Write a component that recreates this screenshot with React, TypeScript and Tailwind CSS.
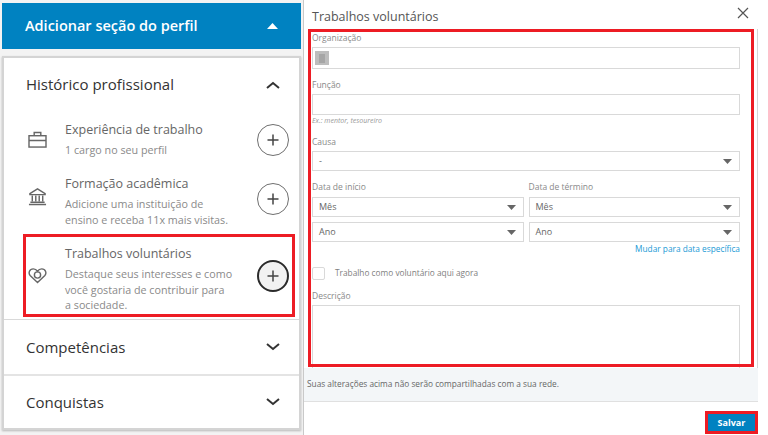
import React from "react";

const Plus = ({ active }: { active?: boolean }) => (
  <div className={`flex h-[32px] w-[32px] shrink-0 items-center justify-center rounded-full border ${active ? "border-2 border-[#2b2b2b] bg-[#f2f2f2]" : "border-[#6f6f6f] bg-white"}`}>
    <svg width="14" height="14" viewBox="0 0 14 14" fill="none" stroke="#444" strokeWidth="1.5">
      <path d="M7 1.5v11M1.5 7h11" />
    </svg>
  </div>
);

const Chevron = ({ up }: { up?: boolean }) => (
  <svg width="14" height="8" viewBox="0 0 14 8" fill="none" stroke="#333" strokeWidth="2" className="mr-[19px]">
    <path d={up ? "M1 7l6-5 6 5" : "M1 1l6 5 6-5"} />
  </svg>
);

const Caret = () => (
  <svg width="9" height="5" viewBox="0 0 9 5" fill="#666"><path d="M0 0h9L4.500 5z" /></svg>
);

const Briefcase = () => (
  <svg width="19" height="17" viewBox="0 0 20 18" fill="none" stroke="#666" strokeWidth="1.500">
    <rect x="1" y="5" width="18" height="12" />
    <path d="M1 10h18M6.500 5V1.500h7V5" />
  </svg>
);

const Bank = () => (
  <svg width="19" height="19" viewBox="0 0 20 20" fill="none" stroke="#666" strokeWidth="1.500">
    <path d="M2 7l8-5 8 5v1H2z" />
    <path d="M4.500 9v6M8.200 9v6M11.800 9v6M15.500 9v6M2.500 16h15M1 18.500h18" />
  </svg>
);

const Heart = () => (
  <svg width="19" height="17" viewBox="0 0 20 18" fill="none" stroke="#666" strokeWidth="1.500">
    <path d="M10 16.500L2.200 9C0 6.500 1.500 2 5.500 2c2 0 3.500 1 4.500 2.500C11 3 12.500 2 14.500 2c4 0 5.500 4.500 3.300 7z" />
    <circle cx="10" cy="8.500" r="3.300" />
  </svg>
);

const Row = ({ icon, title, desc, active, className, iconClass = "", textClass = "" }: { icon: React.ReactNode; title: string; desc: React.ReactNode; active?: boolean; className: string; iconClass?: string; textClass?: string }) => (
  <div className={`flex ${className}`}>
    <div className={`flex w-[39px] shrink-0 items-center pl-[2px] ${iconClass}`}>{icon}</div>
    <div className={`min-w-0 flex-1 ${textClass}`}>
      <div className="text-[12.500px] leading-[18px] text-[#666]">{title}</div>
      <div className="mt-[4px] text-[10.750px] leading-[15.500px] text-[#8a8a8a]">{desc}</div>
    </div>
    <div className="flex items-center"><Plus active={active} /></div>
  </div>
);

const Select = ({ value }: { value: string }) => (
  <div className="flex h-[20px] items-center justify-between border border-[#d9d9d9] pr-[7px] pl-[6px] text-[9px] text-[#666]">
    <span>{value}</span>
    <Caret />
  </div>
);

const Label = ({ children, className = "" }: { children: React.ReactNode; className?: string }) => (
  <div className={`text-[8.500px] leading-[10px] text-[#8a8a8a] ${className}`}>{children}</div>
);

export default function App() {
  return (
    <div className="flex h-[435px] w-[768px] overflow-hidden bg-white font-['Open_Sans','Noto_Sans',sans-serif]">
      <div className="flex w-[303px] shrink-0 flex-col bg-[#f3f3f3] pt-[3px] pr-[2px] pl-[2px]">
        <div className="flex h-[46px] items-center justify-between bg-[#0082c1] pr-[23px] pl-[23px] text-white">
          <span className="text-[14.500px] font-semibold">Adicionar seção do perfil</span>
          <svg width="11" height="6" viewBox="0 0 11 6" fill="white"><path d="M5.500 0L11 6H0z" /></svg>
        </div>
        <div className="mt-[7px] flex h-[374px] flex-col border-2 border-[#d4d4d4] bg-white shadow-[0_1px_2px_rgba(0,0,0,0.25)]">
          <div className="flex h-[54px] items-center justify-between pl-[22px]">
            <span className="text-[15px] text-[#333]">Histórico profissional</span>
            <Chevron up />
          </div>
          <Row className="mt-[10px] mr-[10px] h-[37px] pl-[22px]" icon={<Briefcase />} title="Experiência de trabalho" desc="1 cargo no seu perfil" />
          <Row className="mt-[17px] mr-[10px] h-[48px] pl-[22px]" iconClass="pb-[6px]" icon={<Bank />} title="Formação acadêmica" desc={<>Adicione uma instituição de<br />ensino e receba 11x mais visitas.</>} />
          <div className="mt-[11px] mr-[4px] ml-[19px] h-[83px] shrink-0 border-[3px] border-[#ed1c24]">
            <Row className="h-full pr-[3px]" active textClass="pt-[8px]" icon={<Heart />} title="Trabalhos voluntários" desc={<>Destaque seus interesses e como<br />você gostaria de contribuir para<br />a sociedade.</>} />
          </div>
          <div className="mt-[2px] flex h-[55px] items-center justify-between border-t border-[#d9d9d9] pl-[22px]">
            <span className="text-[15px] text-[#333]">Competências</span>
            <Chevron />
          </div>
          <div className="flex h-[55px] items-center justify-between border-t-2 border-[#e4e4e4] pl-[22px]">
            <span className="text-[15px] text-[#333]">Conquistas</span>
            <Chevron />
          </div>
        </div>
      </div>

      <div className="flex w-[465px] flex-col">
        <div className="flex w-[455px] flex-1 flex-col border-l border-[#c9c9c9]">
          <div className="flex h-[29px] items-center justify-between pr-[7px] pl-[8px]">
            <span className="pt-[5px] text-[12.500px] text-[#555]">Trabalhos voluntários</span>
            <svg width="12" height="12" viewBox="0 0 12 12" fill="none" stroke="#555" strokeWidth="1.200" className="mr-[2px] mb-[3px]"><path d="M1 1l10 10M11 1L1 11" /></svg>
          </div>
          <div className="relative h-[339px] overflow-hidden border-r border-[#d4d4d4]">
            <div className="pt-[4px] pr-[17px] pl-[8px]">
              <Label>Organização</Label>
              <div className="mt-[4px] flex h-[22px] items-center border border-[#d9d9d9] pl-[2px]">
                <div className="flex h-[14px] w-[14px] items-center justify-center bg-[#bdbdbd]">
                  <div className="h-[9px] w-[6px] bg-[#a6a6a6]" />
                </div>
              </div>
              <Label className="mt-[11px]">Função</Label>
              <div className="mt-[4px] h-[21px] border border-[#d9d9d9]" />
              <div className="mt-[2px] text-[7px] leading-[8px] text-[#999] italic">Ex.: mentor, tesoureiro</div>
              <Label className="mt-[12px]">Causa</Label>
              <div className="mt-[4px]"><Select value="-" /></div>
              <div className="mt-[11px] grid grid-cols-2 gap-x-[5px] gap-y-[5px]">
                <Label>Data de início</Label>
                <Label>Data de término</Label>
                <Select value="Mês" />
                <Select value="Mês" />
                <Select value="Ano" />
                <Select value="Ano" />
              </div>
              <div className="mt-[1px] text-right text-[8.300px] leading-[12px] text-[#1a9ad6]">Mudar para data específica</div>
              <div className="mt-[12px] flex items-center">
                <div className="h-[13px] w-[13px] rounded-[2px] border border-[#d9d9d9]" />
                <span className="ml-[10px] text-[8.300px] text-[#808080]">Trabalho como voluntário aqui agora</span>
              </div>
              <Label className="mt-[11px]">Descrição</Label>
              <div className="mt-[4px] h-[70px] border border-[#d9d9d9]" />
            </div>
            <div className="pointer-events-none absolute top-0 right-[3px] left-[4px] h-[338px] border-[3px] border-[#ed1c24]" />
          </div>
          <div className="flex h-[34px] items-center border-b border-[#e0e0e0] bg-[#f3f6f8] pl-[3px] text-[8.300px] text-[#666]">
            Suas alterações acima não serão compartilhadas com a sua rede.
          </div>
          <div className="flex flex-1 items-start justify-end pt-[9px]">
            <div className="border-[3px] border-[#ed1c24]">
              <div className="flex h-[17px] w-[47px] items-center justify-center bg-[#0082c1] text-[9px] font-bold text-white">Salvar</div>
            </div>
          </div>
        </div>
      </div>
    </div>
  );
}
